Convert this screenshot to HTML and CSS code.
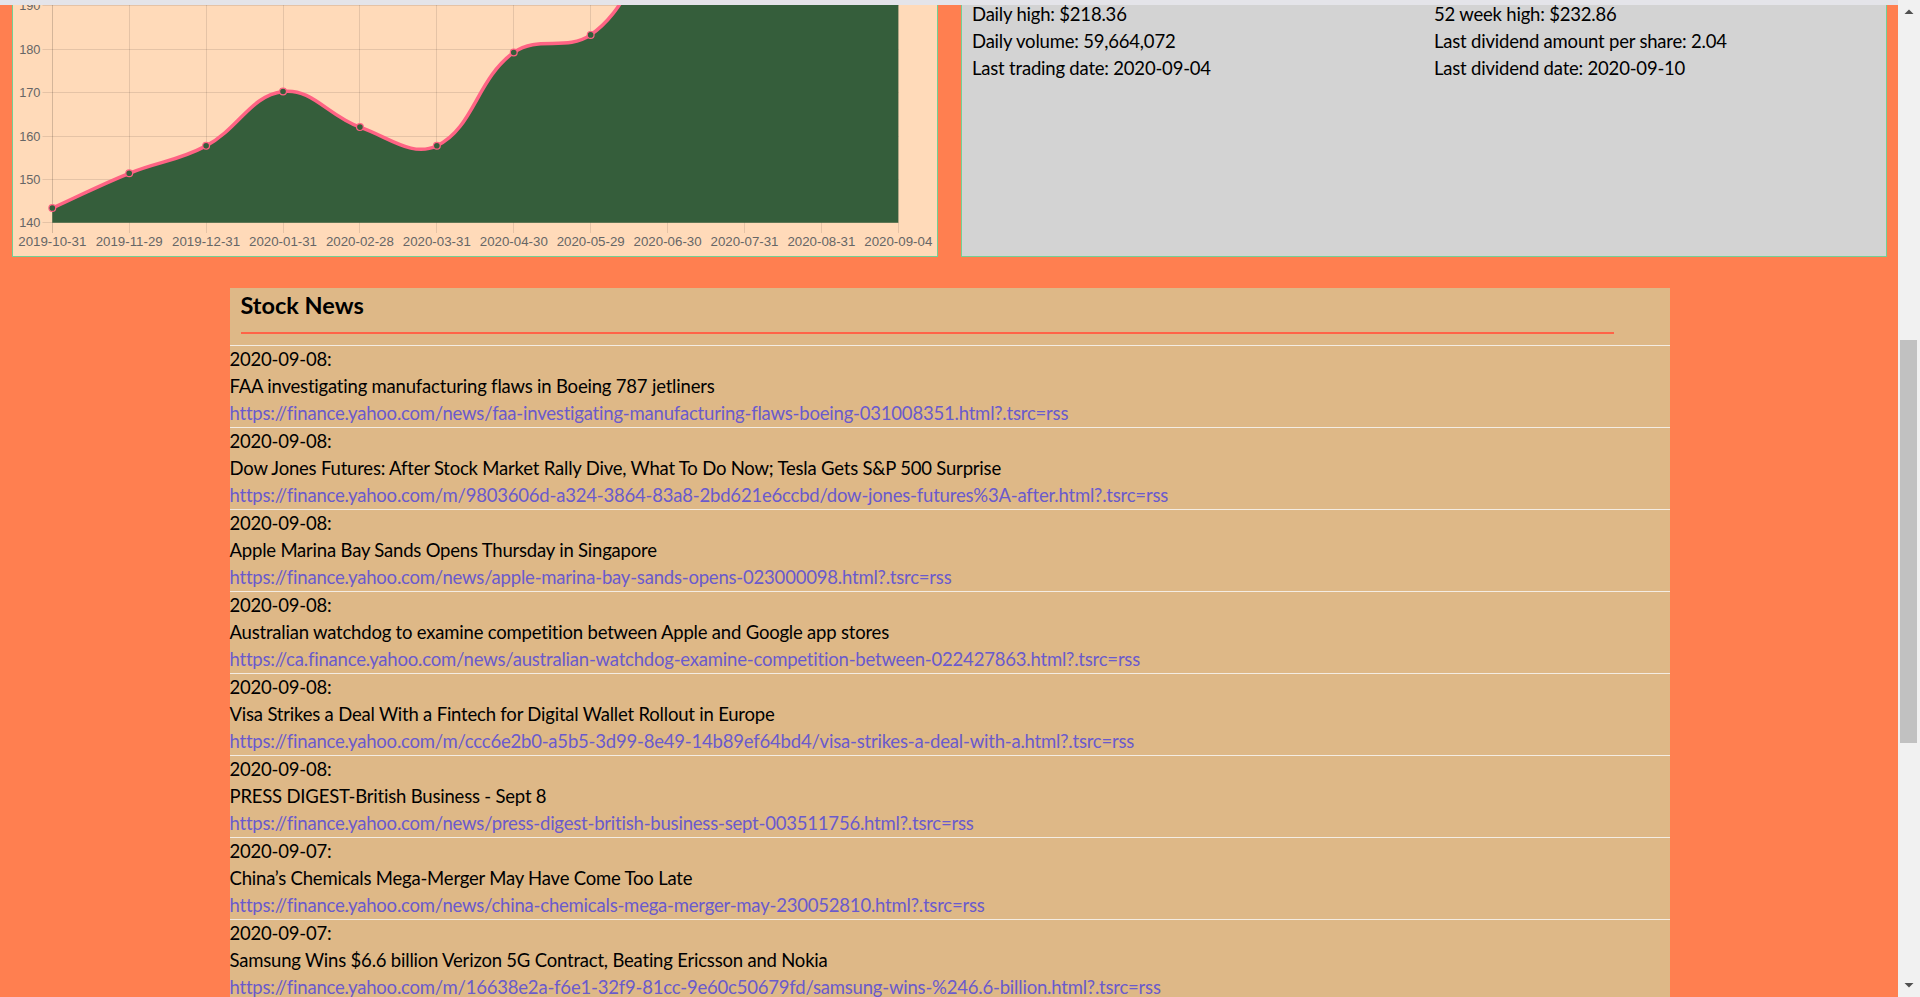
FILE: index.html
```html
<!DOCTYPE html>
<html lang="en">
<head>
<meta charset="utf-8">
<title>Stock overview</title>
<link rel="stylesheet" href="styles.css">
</head>
<body>
<div class="topbar"></div>
<main class="page">
  <section class="overview">
    <div class="panel chart-panel">
      <svg class="chart" viewBox="13 1 924 255" width="924" height="255" xmlns="http://www.w3.org/2000/svg">
        <g class="grid">
          <line x1="42.5" y1="222.5" x2="898.5" y2="222.5"/>
          <line x1="42.5" y1="179.5" x2="898.5" y2="179.5"/>
          <line x1="42.5" y1="136.5" x2="898.5" y2="136.5"/>
          <line x1="42.5" y1="92.5" x2="898.5" y2="92.5"/>
          <line x1="42.5" y1="49.5" x2="898.5" y2="49.5"/>
          <line x1="42.5" y1="5.5" x2="898.5" y2="5.5"/>
          <line class="axis" x1="52.5" y1="-10" x2="52.5" y2="233"/>
          <line x1="129.5" y1="-10" x2="129.5" y2="233"/>
          <line x1="206.5" y1="-10" x2="206.5" y2="233"/>
          <line x1="283.5" y1="-10" x2="283.5" y2="233"/>
          <line x1="359.5" y1="-10" x2="359.5" y2="233"/>
          <line x1="436.5" y1="-10" x2="436.5" y2="233"/>
          <line x1="513.5" y1="-10" x2="513.5" y2="233"/>
          <line x1="590.5" y1="-10" x2="590.5" y2="233"/>
          <line x1="667.5" y1="-10" x2="667.5" y2="233"/>
          <line x1="744.5" y1="-10" x2="744.5" y2="233"/>
          <line x1="821.5" y1="-10" x2="821.5" y2="233"/>
          <line x1="898.5" y1="-10" x2="898.5" y2="233"/>
        </g>
        <path class="area" d="M52.30,208.07 C83.06,194.15 97.94,185.93 129.21,173.28 C159.47,161.04 177.56,161.04 206.12,145.84 C239.08,128.30 250.65,95.37 283.03,91.43 C312.18,87.88 328.11,115.87 359.94,127.12 C389.64,137.62 412.52,157.61 436.85,145.79 C474.04,127.73 476.51,79.28 513.75,52.43 C538.04,34.92 565.86,51.90 590.66,34.89 C627.39,9.69 630.51,-30.33 667.57,-53.09 C692.04,-68.13 720.11,-44.46 744.48,-59.61 C781.64,-82.71 786.72,-139.67 821.39,-148.71 C848.25,-155.71 867.54,-119.32 898.30,-99.73 L898.30,222.7 L52.30,222.7 Z"/>
        <path class="line" d="M52.30,208.07 C83.06,194.15 97.94,185.93 129.21,173.28 C159.47,161.04 177.56,161.04 206.12,145.84 C239.08,128.30 250.65,95.37 283.03,91.43 C312.18,87.88 328.11,115.87 359.94,127.12 C389.64,137.62 412.52,157.61 436.85,145.79 C474.04,127.73 476.51,79.28 513.75,52.43 C538.04,34.92 565.86,51.90 590.66,34.89 C627.39,9.69 630.51,-30.33 667.57,-53.09 C692.04,-68.13 720.11,-44.46 744.48,-59.61 C781.64,-82.71 786.72,-139.67 821.39,-148.71 C848.25,-155.71 867.54,-119.32 898.30,-99.73"/>
        <g class="points">
          <circle cx="52.30" cy="208.07" r="3.4"/>
          <circle cx="129.21" cy="173.28" r="3.4"/>
          <circle cx="206.12" cy="145.84" r="3.4"/>
          <circle cx="283.03" cy="91.43" r="3.4"/>
          <circle cx="359.94" cy="127.12" r="3.4"/>
          <circle cx="436.85" cy="145.79" r="3.4"/>
          <circle cx="513.75" cy="52.43" r="3.4"/>
          <circle cx="590.66" cy="34.89" r="3.4"/>
        </g>
        <g class="ylabels">
          <text x="40.5" y="227.2">140</text>
          <text x="40.5" y="184">150</text>
          <text x="40.5" y="140.7">160</text>
          <text x="40.5" y="97.1">170</text>
          <text x="40.5" y="53.8">180</text>
          <text x="40.5" y="10.4">190</text>
        </g>
        <g class="xlabels">
          <text x="52.3" y="245.5">2019-10-31</text>
          <text x="129.2" y="245.5">2019-11-29</text>
          <text x="206.1" y="245.5">2019-12-31</text>
          <text x="283.0" y="245.5">2020-01-31</text>
          <text x="359.9" y="245.5">2020-02-28</text>
          <text x="436.8" y="245.5">2020-03-31</text>
          <text x="513.8" y="245.5">2020-04-30</text>
          <text x="590.7" y="245.5">2020-05-29</text>
          <text x="667.6" y="245.5">2020-06-30</text>
          <text x="744.5" y="245.5">2020-07-31</text>
          <text x="821.4" y="245.5">2020-08-31</text>
          <text x="898.3" y="245.5">2020-09-04</text>
        </g>
      </svg>
    </div>
    <div class="panel stats-panel">
      <div class="stat">Daily high: $218.36</div>
      <div class="stat">52 week high: $232.86</div>
      <div class="stat">Daily volume: 59,664,072</div>
      <div class="stat">Last dividend amount per share: 2.04</div>
      <div class="stat">Last trading date: 2020-09-04</div>
      <div class="stat">Last dividend date: 2020-09-10</div>
    </div>
  </section>

  <section class="news">
    <div class="news-head">
      <h2 class="news-title">Stock News</h2>
      <div class="news-rule"></div>
    </div>
    <ul class="news-list">
      <li class="news-item">
        <div class="news-date">2020-09-08:</div>
        <div class="news-text">FAA investigating manufacturing flaws in Boeing 787 jetliners</div>
        <a class="news-link" href="https://finance.yahoo.com/news/faa-investigating-manufacturing-flaws-boeing-031008351.html?.tsrc=rss">https://finance.yahoo.com/news/faa-investigating-manufacturing-flaws-boeing-031008351.html?.tsrc=rss</a>
      </li>
      <li class="news-item">
        <div class="news-date">2020-09-08:</div>
        <div class="news-text">Dow Jones Futures: After Stock Market Rally Dive, What To Do Now; Tesla Gets S&amp;P 500 Surprise</div>
        <a class="news-link" href="https://finance.yahoo.com/m/9803606d-a324-3864-83a8-2bd621e6ccbd/dow-jones-futures%3A-after.html?.tsrc=rss">https://finance.yahoo.com/m/9803606d-a324-3864-83a8-2bd621e6ccbd/dow-jones-futures%3A-after.html?.tsrc=rss</a>
      </li>
      <li class="news-item">
        <div class="news-date">2020-09-08:</div>
        <div class="news-text">Apple Marina Bay Sands Opens Thursday in Singapore</div>
        <a class="news-link" href="https://finance.yahoo.com/news/apple-marina-bay-sands-opens-023000098.html?.tsrc=rss">https://finance.yahoo.com/news/apple-marina-bay-sands-opens-023000098.html?.tsrc=rss</a>
      </li>
      <li class="news-item">
        <div class="news-date">2020-09-08:</div>
        <div class="news-text">Australian watchdog to examine competition between Apple and Google app stores</div>
        <a class="news-link" href="https://ca.finance.yahoo.com/news/australian-watchdog-examine-competition-between-022427863.html?.tsrc=rss">https://ca.finance.yahoo.com/news/australian-watchdog-examine-competition-between-022427863.html?.tsrc=rss</a>
      </li>
      <li class="news-item">
        <div class="news-date">2020-09-08:</div>
        <div class="news-text">Visa Strikes a Deal With a Fintech for Digital Wallet Rollout in Europe</div>
        <a class="news-link" href="https://finance.yahoo.com/m/ccc6e2b0-a5b5-3d99-8e49-14b89ef64bd4/visa-strikes-a-deal-with-a.html?.tsrc=rss">https://finance.yahoo.com/m/ccc6e2b0-a5b5-3d99-8e49-14b89ef64bd4/visa-strikes-a-deal-with-a.html?.tsrc=rss</a>
      </li>
      <li class="news-item">
        <div class="news-date">2020-09-08:</div>
        <div class="news-text">PRESS DIGEST-British Business - Sept 8</div>
        <a class="news-link" href="https://finance.yahoo.com/news/press-digest-british-business-sept-003511756.html?.tsrc=rss">https://finance.yahoo.com/news/press-digest-british-business-sept-003511756.html?.tsrc=rss</a>
      </li>
      <li class="news-item">
        <div class="news-date">2020-09-07:</div>
        <div class="news-text">China’s Chemicals Mega-Merger May Have Come Too Late</div>
        <a class="news-link" href="https://finance.yahoo.com/news/china-chemicals-mega-merger-may-230052810.html?.tsrc=rss">https://finance.yahoo.com/news/china-chemicals-mega-merger-may-230052810.html?.tsrc=rss</a>
      </li>
      <li class="news-item">
        <div class="news-date">2020-09-07:</div>
        <div class="news-text">Samsung Wins $6.6 billion Verizon 5G Contract, Beating Ericsson and Nokia</div>
        <a class="news-link" href="https://finance.yahoo.com/m/16638e2a-f6e1-32f9-81cc-9e60c50679fd/samsung-wins-%246.6-billion.html?.tsrc=rss">https://finance.yahoo.com/m/16638e2a-f6e1-32f9-81cc-9e60c50679fd/samsung-wins-%246.6-billion.html?.tsrc=rss</a>
      </li>
    </ul>
  </section>
</main>
<div class="scrollbar" aria-hidden="true">
  <svg class="scroll-arrow up" width="22" height="22" viewBox="0 0 22 22"><polygon points="6.5,14 15.5,14 11,9.5"/></svg>
  <div class="scroll-thumb"></div>
  <svg class="scroll-arrow down" width="22" height="22" viewBox="0 0 22 22"><polygon points="6.5,8 15.5,8 11,12.5"/></svg>
</div>
</body>
</html>
```
FILE: styles.css
```css
html {
  overflow: hidden;
}

body {
  margin: 0;
  background: #ff7f50;
  color: #000;
  font-family: Lato, "Open Sans", "Noto Sans", sans-serif;
  font-size: 18.5px;
  letter-spacing: -0.2px;
  line-height: 27px;
}

.topbar {
  position: fixed;
  top: 0;
  left: 0;
  width: 1898px;
  height: 5px;
  background: #e4e4e9;
  z-index: 5;
}

.page {
  width: 1898px;
  box-sizing: border-box;
  padding: 0 11px 0 12px;
}

.overview {
  display: grid;
  grid-template-columns: 1fr 1fr;
  gap: 23px;
}

.panel {
  border: 1px solid #74cf93;
}

.chart-panel {
  background: #ffdab9;
  height: 257px;
  box-sizing: border-box;
  overflow: hidden;
}

.chart {
  display: block;
}

.grid line {
  stroke: rgba(0, 0, 0, 0.1);
  stroke-width: 1;
}

.grid .axis {
  stroke: rgba(0, 0, 0, 0.17);
}

.area {
  fill: #355e3b;
}

.line {
  fill: none;
  stroke: #ff6384;
  stroke-width: 3.5;
  stroke-linejoin: round;
}

.points circle {
  fill: #355e3b;
  stroke: #ff6384;
  stroke-width: 1.2;
}

.ylabels text,
.xlabels text {
  font-family: "Liberation Sans", Arial, sans-serif;
  fill: #666;
  letter-spacing: 0;
}

.ylabels text {
  font-size: 12.8px;
  text-anchor: end;
}

.xlabels text {
  font-size: 13.3px;
  text-anchor: middle;
}

.stats-panel {
  background: #d3d3d3;
  display: grid;
  grid-template-columns: 1fr 1fr;
  align-content: start;
  line-height: 27px;
}

.stat {
  padding: 0 10px;
}

.news {
  width: 1440px;
  margin: 31px auto 0;
  background: #deb887;
}

.news-head {
  padding: 4px 11px 11px;
}

.news-title {
  margin: 0;
  font-size: 23.5px;
  line-height: 26px;
  font-weight: 700;
  letter-spacing: 0;
}

.news-rule {
  width: 1373px;
  height: 2px;
  margin-top: 14px;
  background: #ff6347;
}

.news-list {
  list-style: none;
  margin: 0;
  padding: 0;
}

.news-item {
  border-top: 1px solid #f4ece2;
}

.news-link {
  display: block;
  color: #6a5acd;
  text-decoration: none;
}

.scrollbar {
  position: fixed;
  top: 0;
  right: 0;
  width: 22px;
  height: 100%;
  background: #f1f1f1;
  display: flex;
  flex-direction: column;
  z-index: 10;
}

.scroll-arrow {
  display: block;
  flex: none;
}

.scroll-arrow polygon {
  fill: #505050;
}

.scroll-thumb {
  flex: none;
  width: 17px;
  height: 403px;
  margin: 318px 0 0 2px;
  background: #c1c1c1;
}

.scroll-arrow.down {
  margin-top: auto;
}
```
